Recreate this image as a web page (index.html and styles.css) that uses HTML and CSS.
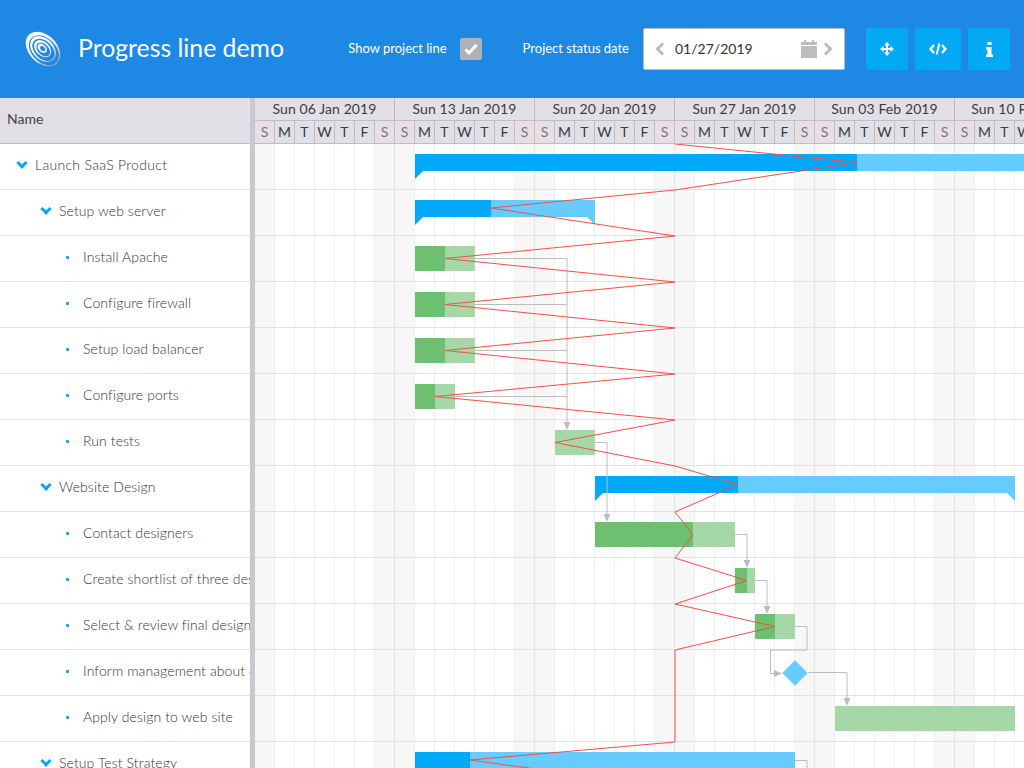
FILE: index.html
```html
<!DOCTYPE html>
<html lang="en">
<head>
    <meta charset="UTF-8">
    <title>Progress line demo</title>
    <link rel="stylesheet" href="styles.css">
</head>
<body>
    <!-- Top bar -->
    <div class="topbar">
        <svg class="logo" width="36" height="36" viewBox="0 0 36 36">
            <defs>
                <linearGradient id="swirl" gradientUnits="userSpaceOnUse" x1="0" y1="18" x2="36" y2="18">
                    <stop offset="0" stop-color="#fff"/>
                    <stop offset="0.6" stop-color="#eee"/>
                    <stop offset="1" stop-color="#a9a9a9"/>
                </linearGradient>
            </defs>
            <g transform="rotate(45 18 18)">
                <ellipse cx="18" cy="18" rx="20" ry="14" fill="url(#swirl)"/>
                <ellipse cx="19.500" cy="18.300" rx="17.500" ry="12" fill="#1e88e5"/>
                <ellipse cx="18" cy="18" rx="15" ry="10.500" fill="url(#swirl)"/>
                <ellipse cx="19" cy="18.300" rx="13" ry="8.800" fill="#1e88e5"/>
                <ellipse cx="17.500" cy="18" rx="10" ry="7" fill="url(#swirl)"/>
                <ellipse cx="18.500" cy="18.200" rx="8" ry="5.300" fill="#1e88e5"/>
                <ellipse cx="17" cy="18" rx="5.500" ry="3.700" fill="url(#swirl)"/>
                <ellipse cx="17.500" cy="18" rx="3" ry="2" fill="#1e88e5"/>
            </g>
        </svg>
        <div class="title">Progress line demo</div>

        <div class="tools">
            <span class="tool-label">Show project line</span>
            <span class="check">
                <svg width="14" height="12" viewBox="0 0 14 12"><path d="M1.500 6.500 5 10 12.500 2" fill="none" stroke="#fff" stroke-width="3"/></svg>
            </span>
            <span class="tool-label status-label">Project status date</span>
            <div class="date-box">
                <svg class="date-prev" width="10" height="14" viewBox="0 0 10 14"><path d="M8 1.500 2.500 7 8 12.500" fill="none" stroke="#bdbdbd" stroke-width="3"/></svg>
                <span class="date-value">01/27/2019</span>
                <svg class="date-cal" width="16" height="18" viewBox="0 0 16 18"><path d="M0 6h16v12H0zM0 2h3V0h2v2h6V0h2v2h3v3H0z" fill="#bdbdbd"/></svg>
                <svg class="date-next" width="10" height="14" viewBox="0 0 10 14"><path d="M2 1.500 7.500 7 2 12.500" fill="none" stroke="#bdbdbd" stroke-width="3"/></svg>
            </div>
            <div class="buttons">
                <a class="btn" href="#"><svg width="14" height="14" viewBox="0 0 14 14"><path d="M7 0l3 3.500H8V6h2.500V4L14 7l-3.500 3V8H8v2.500h2L7 14l-3-3.500h2V8H3.500v2L0 7l3.500-3v2H6V3.500H4z" fill="#fff"/></svg></a>
                <a class="btn btn-wide" href="#"><svg width="18" height="12" viewBox="0 0 18 12"><path d="M5 2 1.500 6 5 10M13 2l3.500 4L13 10" fill="none" stroke="#fff" stroke-width="2.400"/><path d="M10.300 0.500 7.700 11.500" fill="none" stroke="#fff" stroke-width="2"/></svg></a>
                <a class="btn" href="#"><svg width="7" height="15" viewBox="0 0 7 15"><path d="M1.500 0h4v3h-4zM0 5h5.500v7.500H7V15H0v-2.500h1.500V7.500H0z" fill="#fff"/></svg></a>
            </div>
        </div>
    </div>

    <div class="gantt">
        <!-- Task names -->
        <div class="names">
            <div class="names-head">Name</div>
            <div class="name-row lvl0"><i class="chev"></i>Launch SaaS Product</div>
            <div class="name-row lvl1"><i class="chev"></i>Setup web server</div>
            <div class="name-row lvl2"><i class="dot"></i>Install Apache</div>
            <div class="name-row lvl2"><i class="dot"></i>Configure firewall</div>
            <div class="name-row lvl2"><i class="dot"></i>Setup load balancer</div>
            <div class="name-row lvl2"><i class="dot"></i>Configure ports</div>
            <div class="name-row lvl2"><i class="dot"></i>Run tests</div>
            <div class="name-row lvl1"><i class="chev"></i>Website Design</div>
            <div class="name-row lvl2"><i class="dot"></i>Contact designers</div>
            <div class="name-row lvl2"><i class="dot"></i>Create shortlist of three designers</div>
            <div class="name-row lvl2"><i class="dot"></i>Select &amp; review final design</div>
            <div class="name-row lvl2"><i class="dot"></i>Inform management about decision</div>
            <div class="name-row lvl2"><i class="dot"></i>Apply design to web site</div>
            <div class="name-row lvl1"><i class="chev"></i>Setup Test Strategy</div>
        </div>

        <div class="splitter"></div>

        <div class="timeline">
            <div class="weeks">
                <div class="week">Sun 06 Jan 2019</div>
                <div class="week">Sun 13 Jan 2019</div>
                <div class="week">Sun 20 Jan 2019</div>
                <div class="week">Sun 27 Jan 2019</div>
                <div class="week">Sun 03 Feb 2019</div>
                <div class="week">Sun 10 Feb 2019</div>
            </div>
            <div class="days">
                <div class="day off">S</div><div class="day">M</div><div class="day">T</div><div class="day">W</div><div class="day">T</div><div class="day">F</div><div class="day off">S</div>
                <div class="day off">S</div><div class="day">M</div><div class="day">T</div><div class="day">W</div><div class="day">T</div><div class="day">F</div><div class="day off">S</div>
                <div class="day off">S</div><div class="day">M</div><div class="day">T</div><div class="day">W</div><div class="day">T</div><div class="day">F</div><div class="day off">S</div>
                <div class="day off">S</div><div class="day">M</div><div class="day">T</div><div class="day">W</div><div class="day">T</div><div class="day">F</div><div class="day off">S</div>
                <div class="day off">S</div><div class="day">M</div><div class="day">T</div><div class="day">W</div><div class="day">T</div><div class="day">F</div><div class="day off">S</div>
                <div class="day off">S</div><div class="day">M</div><div class="day">T</div><div class="day">W</div>
            </div>

            <div class="chart">
                <div class="row"><div class="bar summary" style="left:160px;width:800px"><div class="done" style="width:442px"></div></div></div>
                <div class="row"><div class="bar summary" style="left:160px;width:180px"><div class="done" style="width:76px"></div></div></div>
                <div class="row"><div class="bar task" style="left:160px;width:60px"><div class="done" style="width:30px"></div></div></div>
                <div class="row"><div class="bar task" style="left:160px;width:60px"><div class="done" style="width:30px"></div></div></div>
                <div class="row"><div class="bar task" style="left:160px;width:60px"><div class="done" style="width:30px"></div></div></div>
                <div class="row"><div class="bar task" style="left:160px;width:40px"><div class="done" style="width:20px"></div></div></div>
                <div class="row"><div class="bar task" style="left:300px;width:40px"></div></div>
                <div class="row"><div class="bar summary" style="left:340px;width:420px"><div class="done" style="width:143px"></div></div></div>
                <div class="row"><div class="bar task" style="left:340px;width:140px"><div class="done" style="width:98px"></div></div></div>
                <div class="row"><div class="bar task" style="left:480px;width:20px"><div class="done" style="width:12px"></div></div></div>
                <div class="row"><div class="bar task" style="left:500px;width:40px"><div class="done" style="width:20px"></div></div></div>
                <div class="row"><div class="milestone" style="left:531px"></div></div>
                <div class="row"><div class="bar task" style="left:580px;width:180px"></div></div>
                <div class="row"><div class="bar summary" style="left:160px;width:380px"><div class="done" style="width:55px"></div></div></div>

                <svg class="lines" width="769" height="644">
                    <g fill="none" stroke="#bdbdbd">
                        <path d="M220 114.500H312V278M220 160.500H312M220 206.500H312M200 252.500H312"/>
                        <path d="M340 298.500H352V370"/>
                        <path d="M480 390.500H492V416"/>
                        <path d="M500 436.500H512V462"/>
                        <path d="M540 482.500H552V506H515.500V529.500H520"/>
                        <path d="M553 528.500H592V554"/>
                        <path d="M540 616.500H552V644"/>
                    </g>
                    <g fill="#bdbdbd">
                        <path d="M308.500 278h7l-3.500 8z"/>
                        <path d="M348.500 370h7l-3.500 8z"/>
                        <path d="M488.500 416h7l-3.500 8z"/>
                        <path d="M508.500 462h7l-3.500 8z"/>
                        <path d="M519 526l8 3.500-8 3.500z"/>
                        <path d="M588.500 554h7l-3.500 8z"/>
                    </g>
                    <polyline fill="none" stroke="#f44f46" points="420,0 602,18.500 420,46 236,64 420,92 190,114.500 420,138 190,160.500 420,184 190,206.500 420,230 180,252.500 420,276 300,298.500 420,322 483,340.500 420,368 438,390.500 420,414 492,436.500 420,460 520,482.500 420,506 420,598 215,616 420,644"/>
                </svg>
            </div>
        </div>
    </div>
</body>
</html>
```

FILE: styles.css
```css
body, html {
    margin: 0;
    padding: 0;
    height: 768px;
    overflow: hidden;
    background-color: #fff;
    font-family: Lato, "Open Sans", sans-serif;
}

/* Top bar */
.topbar {
    display: flex;
    align-items: center;
    height: 98px;
    padding: 0 14px 0 25px;
    box-sizing: border-box;
    background-color: #1e88e5;
    color: #fff;
}

.logo {
    flex: none;
    margin-top: -1px;
}

.title {
    margin-left: 17px;
    margin-top: -3px;
    font-size: 24.8px;
}

.tools {
    display: flex;
    align-items: center;
    margin-left: auto;
}

.tool-label {
    margin-top: -2px;
    font-size: 13px;
}

.check {
    display: flex;
    align-items: center;
    justify-content: center;
    width: 22px;
    height: 22px;
    margin-left: 13px;
    border-radius: 2px;
    background-color: #b0b0b8;
}

.status-label {
    margin-left: 41px;
}

.date-box {
    display: flex;
    align-items: center;
    box-sizing: border-box;
    width: 202px;
    height: 42px;
    margin-left: 14px;
    padding: 0 11px;
    border: 1px solid #bdbdbd;
    border-radius: 2px;
    background-color: #fff;
    color: #333;
}

.date-value {
    margin-left: 10px;
    margin-top: -2px;
    font-size: 14px;
}

.date-cal {
    margin-left: auto;
}

.date-next {
    margin-left: 6px;
}

.buttons {
    display: flex;
    gap: 7px;
    margin-left: 21px;
}

.btn {
    display: flex;
    align-items: center;
    justify-content: center;
    width: 42px;
    height: 42px;
    border-radius: 2px;
    background-color: #03a9f4;
}

.btn-wide {
    width: 46px;
}

/* Gantt */
.gantt {
    display: flex;
    height: 670px;
    overflow: hidden;
}

.names {
    flex: none;
    width: 250px;
}

.names-head {
    display: flex;
    align-items: center;
    box-sizing: border-box;
    height: 46px;
    padding: 0 0 4px 7px;
    border-bottom: 1px solid #bdbdc4;
    background-color: #e0e0e6;
    color: #444;
    font-size: 14px;
}

.name-row {
    display: flex;
    align-items: center;
    box-sizing: border-box;
    height: 46px;
    padding-bottom: 5px;
    border-bottom: 1px solid #e2e2e6;
    color: #333;
    font-size: 14px;
    font-weight: 300;
    letter-spacing: 0.1px;
    white-space: nowrap;
    overflow: hidden;
}

.lvl0 { padding-left: 16px; letter-spacing: 0.3px; }
.lvl1 { padding-left: 40px; }
.lvl2 { padding-left: 65px; }

.chev {
    flex: none;
    width: 8px;
    height: 8px;
    margin: -3px 9px 0 2px;
    border-right: 3px solid #03a9f4;
    border-bottom: 3px solid #03a9f4;
    box-sizing: border-box;
    transform: rotate(45deg);
}

.dot {
    flex: none;
    width: 3px;
    height: 3px;
    margin: 3px 14px 0 1px;
    border-radius: 1px;
    background-color: #03a9f4;
}

.splitter {
    flex: none;
    width: 5px;
    background-color: #c8c8d0;
}

.timeline {
    flex: 1;
    min-width: 0;
    overflow: hidden;
}

.weeks, .days {
    display: flex;
    width: 840px;
    background-color: #e0e0e6;
    color: #3c3c3c;
    font-size: 14px;
}

.weeks {
    height: 23px;
}

.week {
    flex: none;
    width: 140px;
    box-sizing: border-box;
    padding-bottom: 1px;
    border-right: 1px solid #bdbdc4;
    border-bottom: 1px solid #bdbdc4;
    text-align: center;
    line-height: 21px;
    letter-spacing: 0.1px;
}

.days {
    height: 23px;
}

.day {
    flex: none;
    width: 20px;
    box-sizing: border-box;
    border-right: 1px solid #bdbdc4;
    border-bottom: 1px solid #bdbdc4;
    text-align: center;
    line-height: 21px;
}

.day.off {
    background-color: #e8dfe4;
    color: #777;
}

/* Chart: day columns and weekends are painted behind the rows */
.chart {
    position: relative;
    height: 644px;
    background-image:
        repeating-linear-gradient(90deg, transparent 0, transparent 139px, #e4e4ea 139px, #e4e4ea 140px),
        repeating-linear-gradient(90deg, transparent 0, transparent 19px, #f0f0f4 19px, #f0f0f4 20px),
        repeating-linear-gradient(90deg, #f7f7f7 0, #f7f7f7 20px, transparent 20px, transparent 120px, #f7f7f7 120px, #f7f7f7 140px);
}

.row {
    position: relative;
    box-sizing: border-box;
    height: 46px;
    border-bottom: 1px solid #e2e2e6;
}

.bar {
    position: absolute;
    top: 10px;
}

.bar .done {
    height: 100%;
}

.task {
    height: 25px;
    background-color: #a5d8a7;
}

.task .done {
    background-color: #6cc070;
}

.summary {
    height: 17px;
    background-color: #66ccff;
}

.summary .done {
    background-color: #03a9f9;
}

.summary::before, .summary::after {
    content: "";
    position: absolute;
    top: 100%;
    width: 0;
    height: 0;
    border-top: 8px solid #03a9f9;
}

.summary::before {
    left: 0;
    border-right: 8px solid transparent;
}

.summary::after {
    right: 0;
    border-top-color: #66ccff;
    border-left: 8px solid transparent;
}

.milestone {
    position: absolute;
    top: 14px;
    width: 18px;
    height: 18px;
    background-color: #66ccff;
    transform: rotate(45deg);
}

.lines {
    position: absolute;
    top: 0;
    left: 0;
    pointer-events: none;
}
```
